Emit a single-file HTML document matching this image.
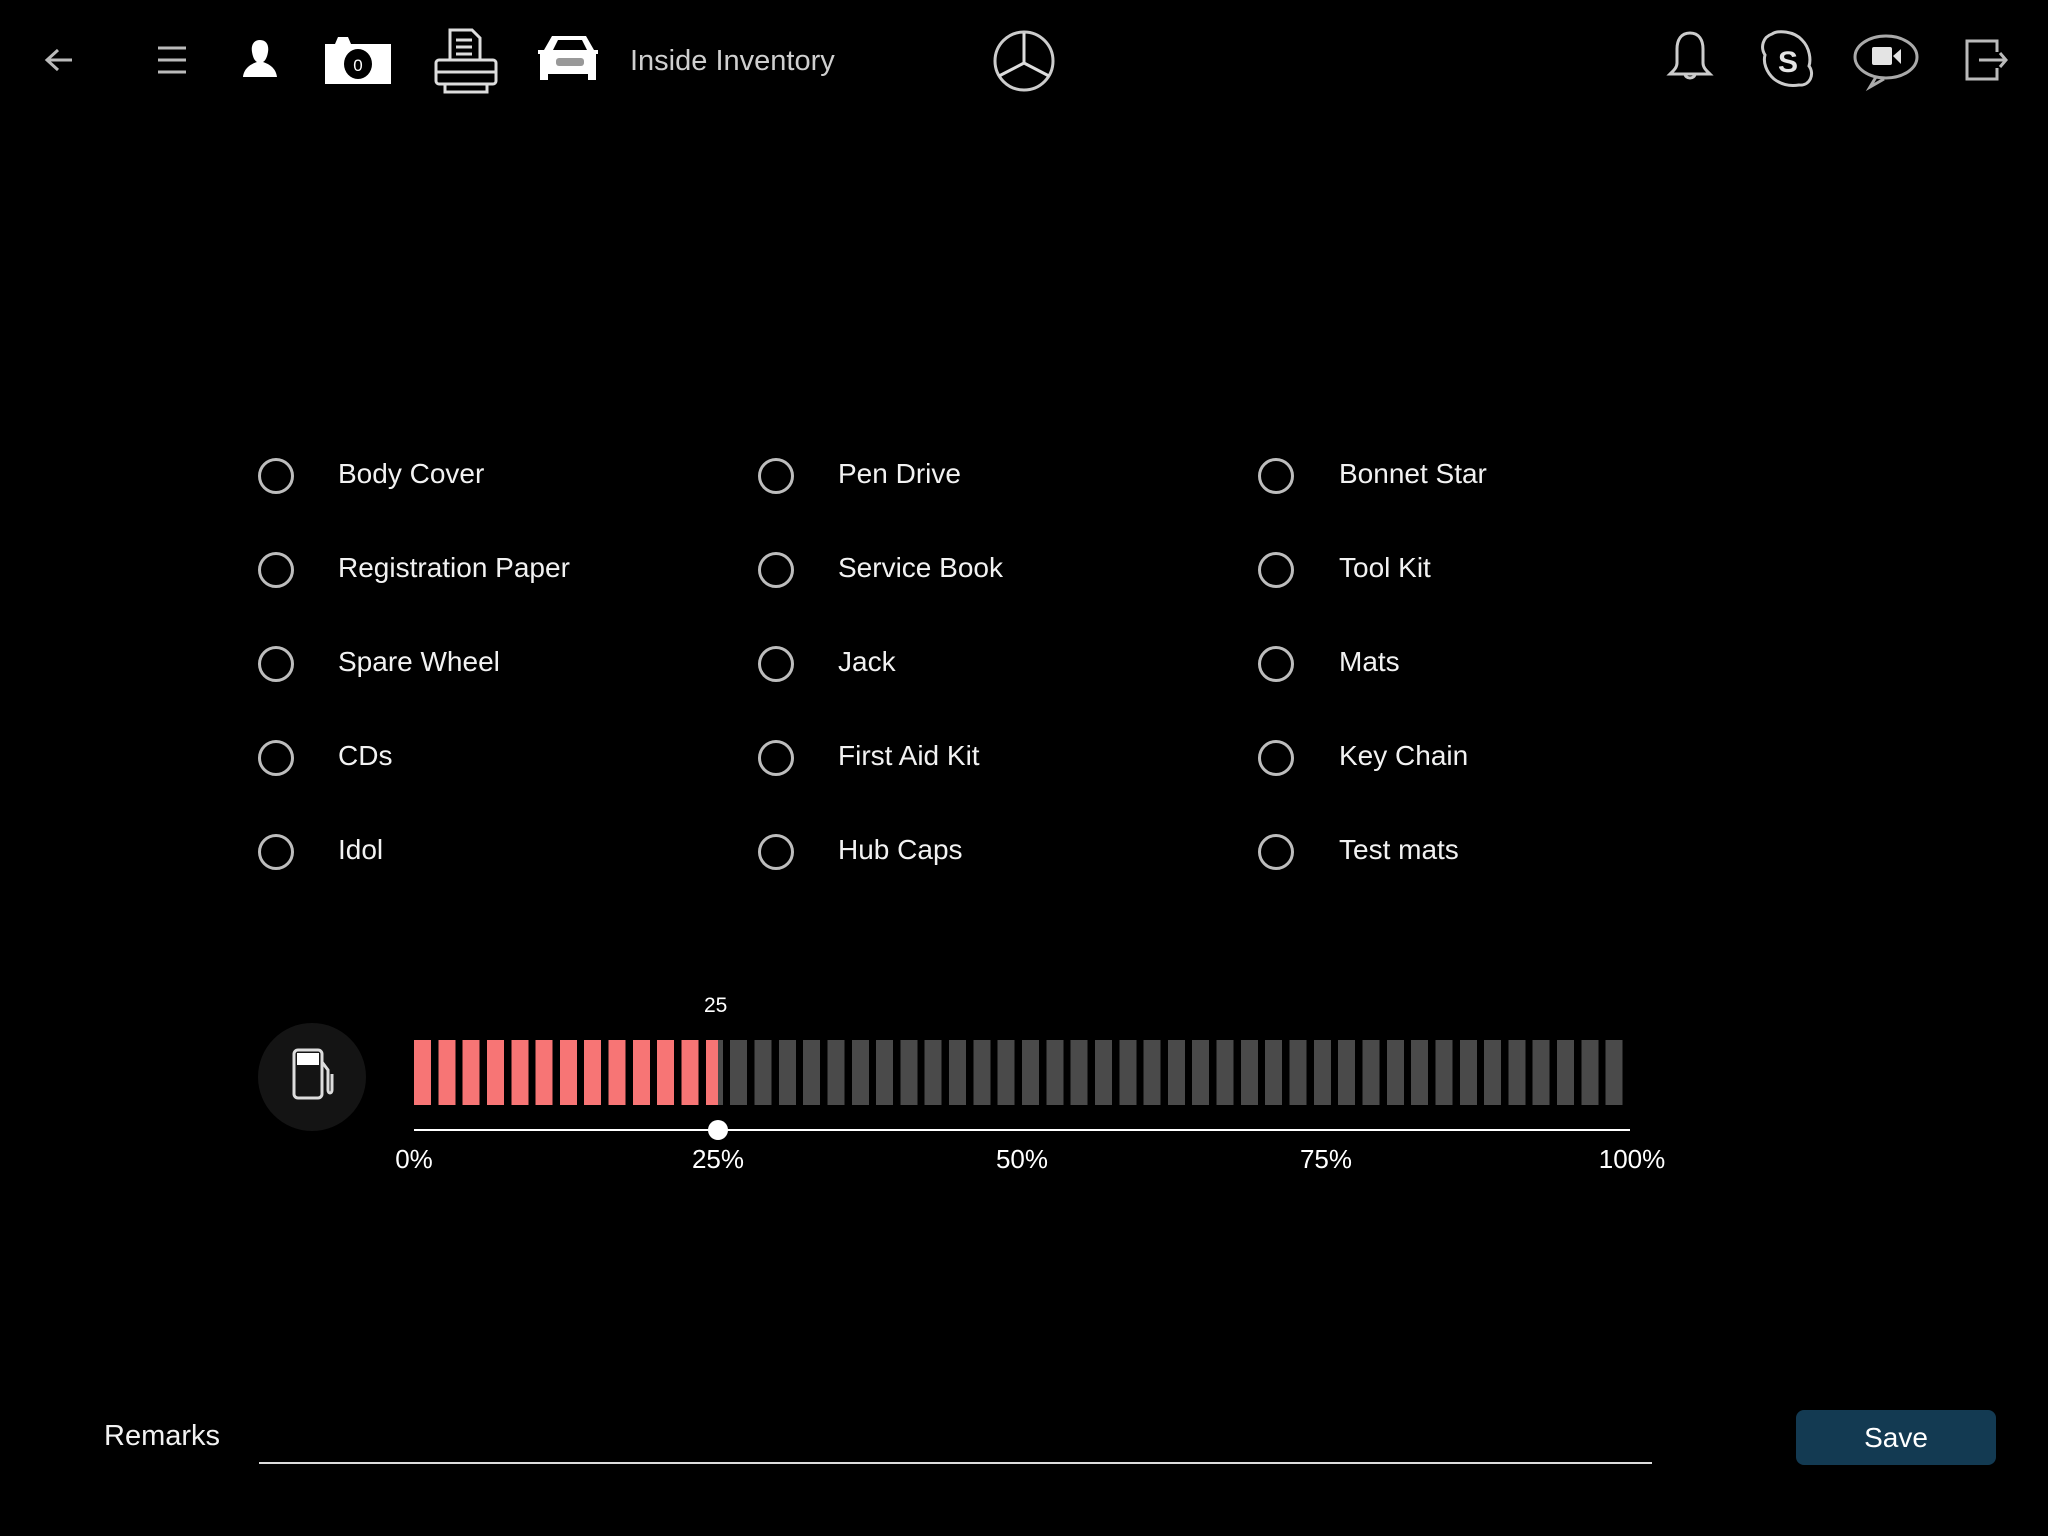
<!DOCTYPE html>
<html><head><meta charset="utf-8"><style>
html,body{margin:0;padding:0;background:#000;width:2048px;height:1536px;overflow:hidden;font-family:"Liberation Sans",sans-serif;color:#fff}
.a{position:absolute}
.item{position:absolute;font-size:28px;line-height:34px;color:#f2f2f2}
.rad{position:absolute;width:30px;height:30px;border:3px solid #bdbdbd;border-radius:50%}
.pct{position:absolute;font-size:26px;top:1144px;transform:translateX(-50%);color:#fff}
</style></head><body>
<svg class="a" style="left:0;top:0" width="2048" height="130" viewBox="0 0 2048 130">
 <g stroke="#bbb" stroke-width="3" fill="none">
  <path d="M72 60H48M58 50L47 60L58 70"/>
  <path d="M158 48H186M158 60H186M158 72H186"/>
 </g>
 <path d="M260 40c-7 0-9 6-8 12c1 6 3 9 5 10c-6 2-13 6-14 15h34c-1-9-8-13-14-15c2-1 4-4 5-10c1-6-1-12-8-12z" fill="#fff"/>
 <path d="M325 44h10l3-7h10l3 7h40v40h-66z" fill="#fff"/>
 <ellipse cx="358" cy="64" rx="14" ry="15" fill="#000"/>
 <text x="358" y="71" font-size="17" fill="#fff" text-anchor="middle" font-family="Liberation Sans">0</text>
 <g stroke="#ddd" stroke-width="3" fill="none">
  <path d="M450 60V30h22l8 8v22"/>
  <path d="M456 40h16M456 47h16M456 54h16"/>
  <rect x="436" y="60" width="60" height="24" rx="3"/>
  <path d="M436 72h60"/>
  <rect x="445" y="84" width="42" height="8"/>
 </g>
 <path d="M544 50l8-14h34l8 14h4v4h-2v26h-8v-6h-40v6h-8v-26h-2v-4z" fill="#fff"/>
 <path d="M553 50l5-10h24l5 10z" fill="#000"/>
 <rect x="556" y="58" width="28" height="8" rx="3" fill="#999"/>
 <text x="630" y="70" font-size="29" fill="#cfcfcf" font-family="Liberation Sans">Inside Inventory</text>
 <circle cx="1024" cy="61" r="29" stroke="#ccc" stroke-width="3" fill="none"/>
 <path d="M1024 33V63M1024 63L999 76M1024 63L1049 76" fill="none" stroke="#ddd" stroke-width="3"/>
 <path d="M1690 33c-9 0-13 7-13 16v14c0 5-4 8-7 11h40c-3-3-7-6-7-11v-14c0-9-4-16-13-16zM1685 74a5 4 0 0 0 10 0" stroke="#ccc" stroke-width="3" fill="none"/>
 <path d="M1772 34c6-4 22-3 30 6c8 8 9 20 7 26c6 8 1 20-10 19c-6 1-16 1-25-6c-8-7-11-17-9-24c-5-8-2-18 7-21z" stroke="#ccc" stroke-width="3" fill="none"/>
 <text x="1788" y="72" font-size="30" font-weight="bold" fill="#e4e4e4" text-anchor="middle" font-family="Liberation Sans">S</text>
 <ellipse cx="1886" cy="57" rx="31" ry="21" stroke="#aaa" stroke-width="3" fill="none"/>
 <path d="M1876 77l-6 10l14-8" stroke="#aaa" stroke-width="3" fill="none"/>
 <rect x="1872" y="47" width="20" height="18" rx="2" fill="#e4e4e4"/>
 <path d="M1893 56l8-7v15z" fill="#e4e4e4"/>
 <path d="M1997 52V41h-30v38h30V68M1979 60h27M2000 53l6 7l-6 7" stroke="#bbb" stroke-width="3" fill="none"/>
</svg>

<div class="rad" style="left:258px;top:458px"></div><div class="item" style="left:338px;top:457px">Body Cover</div>
<div class="rad" style="left:258px;top:552px"></div><div class="item" style="left:338px;top:551px">Registration Paper</div>
<div class="rad" style="left:258px;top:646px"></div><div class="item" style="left:338px;top:645px">Spare Wheel</div>
<div class="rad" style="left:258px;top:740px"></div><div class="item" style="left:338px;top:739px">CDs</div>
<div class="rad" style="left:258px;top:834px"></div><div class="item" style="left:338px;top:833px">Idol</div>

<div class="rad" style="left:758px;top:458px"></div><div class="item" style="left:838px;top:457px">Pen Drive</div>
<div class="rad" style="left:758px;top:552px"></div><div class="item" style="left:838px;top:551px">Service Book</div>
<div class="rad" style="left:758px;top:646px"></div><div class="item" style="left:838px;top:645px">Jack</div>
<div class="rad" style="left:758px;top:740px"></div><div class="item" style="left:838px;top:739px">First Aid Kit</div>
<div class="rad" style="left:758px;top:834px"></div><div class="item" style="left:838px;top:833px">Hub Caps</div>

<div class="rad" style="left:1258px;top:458px"></div><div class="item" style="left:1339px;top:457px">Bonnet Star</div>
<div class="rad" style="left:1258px;top:552px"></div><div class="item" style="left:1339px;top:551px">Tool Kit</div>
<div class="rad" style="left:1258px;top:646px"></div><div class="item" style="left:1339px;top:645px">Mats</div>
<div class="rad" style="left:1258px;top:740px"></div><div class="item" style="left:1339px;top:739px">Key Chain</div>
<div class="rad" style="left:1258px;top:834px"></div><div class="item" style="left:1339px;top:833px">Test mats</div>

<div class="a" style="left:258px;top:1023px;width:108px;height:108px;border-radius:50%;background:#141414"></div>
<svg class="a" style="left:280px;top:1040px" width="64" height="74" viewBox="0 0 64 74">
 <rect x="14" y="10" width="28" height="48" rx="4" stroke="#ddd" stroke-width="3" fill="none"/>
 <rect x="17" y="13" width="22" height="12" fill="#fff"/>
 <path d="M42 22l6 8v20c0 4 4 4 4 0V34" stroke="#ddd" stroke-width="3" fill="none"/>
</svg>

<div class="a" style="left:704px;top:994px;font-size:21px">25</div>
<div class="a" style="left:414px;top:1040px;width:1216px;height:65px;background:repeating-linear-gradient(90deg,#4a4a4a 0 17px,#000 17px 24.32px)"></div>
<div class="a" style="left:414px;top:1040px;width:304px;height:65px;background:repeating-linear-gradient(90deg,#f77575 0 17px,#000 17px 24.32px)"></div>
<div class="a" style="left:414px;top:1129px;width:1216px;height:2px;background:#fff"></div>
<div class="a" style="left:708px;top:1120px;width:20px;height:20px;border-radius:50%;background:#fff"></div>
<div class="pct" style="left:414px">0%</div>
<div class="pct" style="left:718px">25%</div>
<div class="pct" style="left:1022px">50%</div>
<div class="pct" style="left:1326px">75%</div>
<div class="pct" style="left:1632px">100%</div>

<div class="a" style="left:104px;top:1420px;font-size:29px;color:#f2f2f2">Remarks</div>
<div class="a" style="left:259px;top:1462px;width:1393px;height:2px;background:#ddd"></div>
<div class="a" style="left:1796px;top:1410px;width:200px;height:55px;border-radius:8px;background:#133a52;font-size:28px;line-height:55px;text-align:center;color:#fff">Save</div>
</body></html>
